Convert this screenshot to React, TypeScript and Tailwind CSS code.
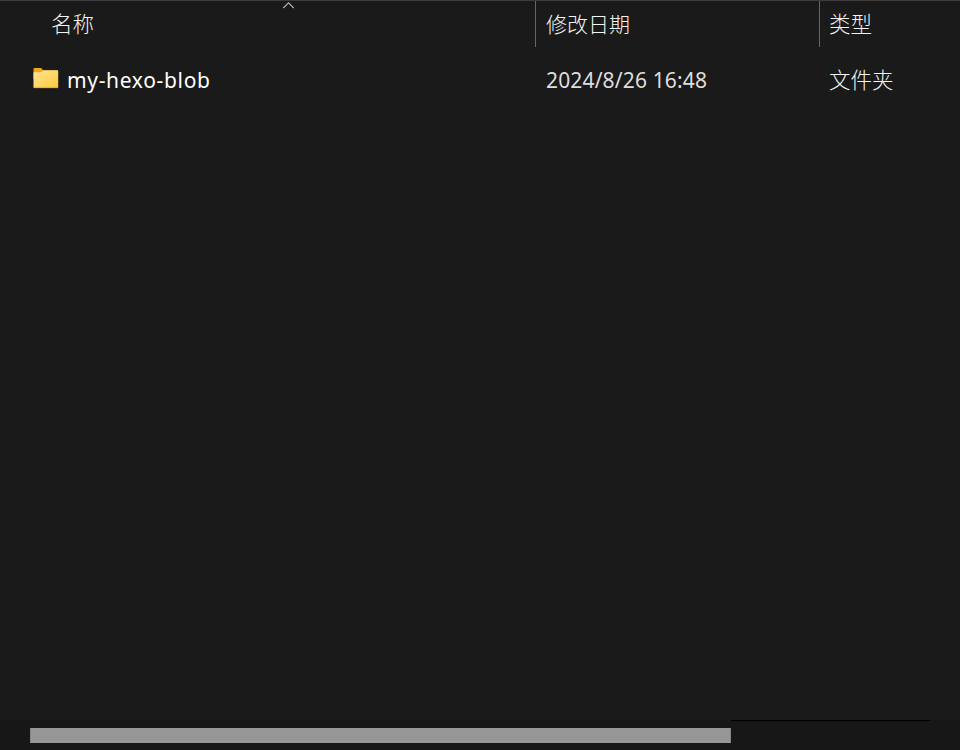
function FolderIcon() {
  return (
    <svg width="26" height="22" viewBox="0 0 26 22" className="-mt-[7px] block shrink-0" aria-hidden="true">
      <defs>
        <linearGradient id="folderFront" x1="0" y1="0" x2="1" y2="1">
          <stop offset="0" stopColor="#ffe59a" />
          <stop offset="1" stopColor="#ffc937" />
        </linearGradient>
      </defs>
      <path d="M0.5 2Q0.5 1 1.5 1H8L10.5 3.5H24.5V12H0.5Z" fill="#f2a818" />
      <path d="M0.5 5.2H8.3L10.5 3.2H24.5Q25.2 3.2 25.2 4V20.2Q25.2 21 24.5 21H1.2Q0.5 21 0.5 20.2Z" fill="url(#folderFront)" />
      <path d="M0.8 20.7H25" stroke="#d9a22c" strokeWidth="0.7" />
    </svg>
  );
}

export default function App() {
  return (
    <main className="flex h-[750px] w-[960px] flex-col overflow-hidden border-t border-[#3c3c3c] bg-[#1a1a1a] font-['Noto_Sans','Noto_Sans_CJK_SC',sans-serif] text-[21px] text-[#dedede]">
      <header className="flex h-[46px] shrink-0 font-['Noto_Sans_CJK_SC',sans-serif] font-light leading-[44px] text-[#f4f4f4]">
        <div className="relative w-[535px] pl-[51px] text-[21.5px]">
          名称
          <svg width="14" height="8" viewBox="0 0 14 8" className="absolute left-[282px] top-0" fill="none" stroke="#b4b4b4" strokeWidth="1.1" aria-hidden="true">
            <path d="M1.3 7L6.5 1.8L11.7 7" />
          </svg>
        </div>
        <div className="w-[284px] border-l border-[#656565] pl-[10px]">修改日期</div>
        <div className="w-[141px] border-l border-[#656565] pl-[9px] text-[21.5px]">类型</div>
      </header>
      <section className="mt-[14px] flex h-10 shrink-0 items-center whitespace-nowrap">
        <div className="flex w-[546px] items-center pl-[33px]">
          <FolderIcon />
          <span className="ml-[8px] tracking-[0.67px] text-white">my-hexo-blob</span>
        </div>
        <div className="w-[283px] tracking-[0.15px]">2024/8/26 16:48</div>
        <div className="-mt-[4px] font-['Noto_Sans_CJK_SC',sans-serif] text-[21.5px] font-light text-[#f4f4f4]">文件夹</div>
      </section>
      <div className="flex-1" />
      <footer className="h-[30px] shrink-0 bg-[#171717] px-[30px]">
        <div className="ml-[701px] h-px w-[199px] bg-black" />
        <div className="mt-[7px] h-[15px] w-[701px] border-x border-[#858585] bg-[#969696]" />
      </footer>
    </main>
  );
}
